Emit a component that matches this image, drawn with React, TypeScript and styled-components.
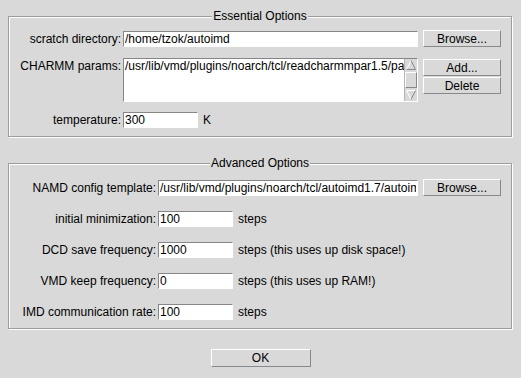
import React from "react";
import styled, { createGlobalStyle } from "styled-components";

const Global = createGlobalStyle`
  html, body { margin: 0; padding: 0; background: #d9d9d9; }
  body {
    font-family: "Liberation Sans", Arial, Helvetica, sans-serif;
    font-size: 12px;
    color: #000;
  }
`;

const Window = styled.div`
  width: 521px;
  height: 378px;
  box-sizing: border-box;
  padding: 9px 9px 0 8px;
  display: flex;
  flex-direction: column;
  background: #d9d9d9;
`;

const Frame = styled.fieldset<{ $mt?: number; $pt: number; $pb: number }>`
  margin: ${(p) => p.$mt ?? 0}px 0 0 0;
  padding: ${(p) => p.$pt}px 0 ${(p) => p.$pb}px 0;
  min-width: 0;
  border: 1px solid #9c9c9c;
  box-shadow: inset 1px 1px 0 #ffffff, 1px 1px 0 #ffffff;
  display: flex;
  flex-direction: column;
`;

const Title = styled.legend`
  margin: 0 auto;
  padding: 0 1px;
  line-height: 14px;
  font-size: 12px;
  background: #d9d9d9;
`;

const Row = styled.div<{ $cols: string; $mt?: number; $align?: string }>`
  display: grid;
  grid-template-columns: ${(p) => p.$cols};
  column-gap: 0;
  align-items: ${(p) => p.$align ?? "center"};
  margin-top: ${(p) => p.$mt ?? 0}px;
`;

const Label = styled.div<{ $top?: number }>`
  text-align: right;
  white-space: nowrap;
  padding-right: 2px;
  padding-top: ${(p) => p.$top ?? 0}px;
  line-height: 14px;
`;

const Field = styled.div`
  display: flex;
  align-items: center;
  gap: 5px;
  min-width: 0;
`;

const Entry = styled.input<{ $w?: number }>`
  box-sizing: border-box;
  width: ${(p) => (p.$w ? `${p.$w}px` : "100%")};
  height: 16px;
  margin: 0;
  padding: 0 1px;
  font: inherit;
  font-size: 12px;
  color: #000;
  background: #ffffff;
  border: 1px solid;
  border-color: #868686 #ffffff #ffffff #868686;
  outline: none;
`;

const Unit = styled.span`
  white-space: nowrap;
  line-height: 14px;
`;

const Button = styled.button<{ $w?: number; $h?: number }>`
  box-sizing: border-box;
  width: ${(p) => p.$w ?? 78}px;
  height: ${(p) => p.$h ?? 17}px;
  margin: 0;
  padding: 0;
  font: inherit;
  font-size: 12px;
  color: #000;
  background: #d9d9d9;
  border: 1px solid;
  border-color: #ffffff #888888 #888888 #ffffff;
  line-height: 14px;
`;

const ButtonCol = styled.div`
  display: flex;
  flex-direction: column;
  gap: 1px;
  padding-top: 1px;
`;

const Listbox = styled.div`
  box-sizing: border-box;
  height: 44px;
  display: flex;
  background: #ffffff;
  border: 1px solid;
  border-color: #868686 #ffffff #ffffff #868686;
`;

const ListText = styled.div`
  flex: 1;
  min-width: 0;
  overflow: hidden;
  white-space: nowrap;
  padding: 0 0 0 1px;
  line-height: 14px;
`;

const Scrollbar = styled.div`
  width: 12px;
  display: flex;
  flex-direction: column;
  background: #d9d9d9;
  border-left: 1px solid #b5b5b5;
`;

const Thumb = styled.div`
  flex: 1;
  box-sizing: border-box;
  margin: 1px 0;
  border: 1px solid;
  border-color: #ffffff #888888 #888888 #ffffff;
`;

const Arrow = ({ up }: { up?: boolean }) => (
  <svg width="12" height="12" viewBox="0 0 12 12" style={{ display: "block" }}>
    {up ? (
      <>
        <path d="M6 1.5 L1.5 10.5" stroke="#ffffff" strokeWidth="1" fill="none" />
        <path d="M6 1.5 L10.5 10.5 L1.5 10.5" stroke="#888888" strokeWidth="1" fill="none" />
      </>
    ) : (
      <>
        <path d="M1.5 1.5 L10.5 1.5 M1.5 1.5 L6 10.5" stroke="#ffffff" strokeWidth="1" fill="none" />
        <path d="M10.5 1.5 L6 10.5" stroke="#888888" strokeWidth="1" fill="none" />
      </>
    )}
  </svg>
);

const Footer = styled.div`
  display: flex;
  justify-content: center;
  margin-top: 20px;
  padding-left: 1px;
`;

const C1 = "114px 295px 5px 78px";
const C2 = "149px 260px 5px 78px";

export default function App() {
  return (
    <>
      <Global />
      <Window>
        <Frame $pt={7} $pb={8}>
          <Title>Essential Options</Title>
          <Row $cols={C1}>
            <Label>scratch directory:</Label>
            <Entry readOnly value="/home/tzok/autoimd" />
            <span />
            <Button>Browse...</Button>
          </Row>
          <Row $cols={C1} $mt={11} $align="start">
            <Label $top={1}>CHARMM params:</Label>
            <Listbox>
              <ListText>/usr/lib/vmd/plugins/noarch/tcl/readcharmmpar1.5/par_all27_prot_lipid_na.inp</ListText>
              <Scrollbar>
                <Arrow up />
                <Thumb />
                <Arrow />
              </Scrollbar>
            </Listbox>
            <span />
            <ButtonCol>
              <Button>Add...</Button>
              <Button>Delete</Button>
            </ButtonCol>
          </Row>
          <Row $cols={C1} $mt={10}>
            <Label>temperature:</Label>
            <Field>
              <Entry readOnly value="300" $w={75} />
              <Unit>K</Unit>
            </Field>
          </Row>
        </Frame>

        <Frame $mt={19} $pt={9} $pb={8}>
          <Title>Advanced Options</Title>
          <Row $cols={C2}>
            <Label>NAMD config template:</Label>
            <Entry readOnly value="/usr/lib/vmd/plugins/noarch/tcl/autoimd1.7/autoimd-template.namd" />
            <span />
            <Button>Browse...</Button>
          </Row>
          <Row $cols={C2} $mt={15}>
            <Label>initial minimization:</Label>
            <Field>
              <Entry readOnly value="100" $w={75} />
              <Unit>steps</Unit>
            </Field>
          </Row>
          <Row $cols={C2} $mt={15}>
            <Label>DCD save frequency:</Label>
            <Field>
              <Entry readOnly value="1000" $w={75} />
              <Unit>steps (this uses up disk space!)</Unit>
            </Field>
          </Row>
          <Row $cols={C2} $mt={15}>
            <Label>VMD keep frequency:</Label>
            <Field>
              <Entry readOnly value="0" $w={75} />
              <Unit>steps (this uses up RAM!)</Unit>
            </Field>
          </Row>
          <Row $cols={C2} $mt={15}>
            <Label>IMD communication rate:</Label>
            <Field>
              <Entry readOnly value="100" $w={75} />
              <Unit>steps</Unit>
            </Field>
          </Row>
        </Frame>

        <Footer>
          <Button $w={100} $h={18}>OK</Button>
        </Footer>
      </Window>
    </>
  );
}
